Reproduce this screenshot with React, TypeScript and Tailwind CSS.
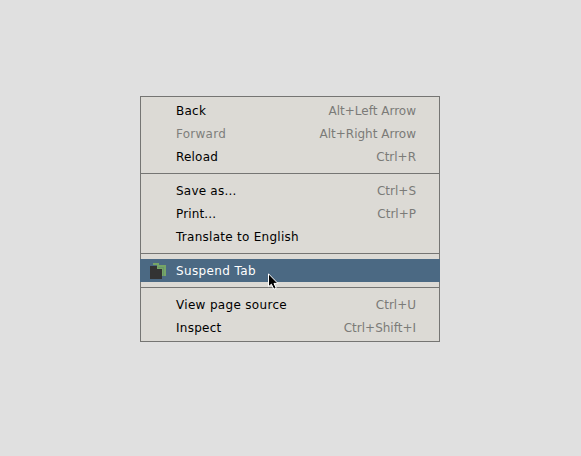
import React from "react";

type Item = {
  label: string;
  shortcut?: string;
  disabled?: boolean;
  active?: boolean;
  tracking?: string;
};

const groups: Item[][] = [
  [
    { label: "Back", shortcut: "Alt+Left Arrow" },
    { label: "Forward", shortcut: "Alt+Right Arrow", disabled: true, tracking: "tracking-[0.25px]" },
    { label: "Reload", shortcut: "Ctrl+R", tracking: "tracking-[0.2px]" },
  ],
  [
    { label: "Save as...", shortcut: "Ctrl+S", tracking: "tracking-[0.22px]" },
    { label: "Print...", shortcut: "Ctrl+P", tracking: "tracking-[0.15px]" },
    { label: "Translate to English", tracking: "tracking-[0.27px]" },
  ],
  [{ label: "Suspend Tab", active: true, tracking: "tracking-[0.38px]" }],
  [
    { label: "View page source", shortcut: "Ctrl+U", tracking: "tracking-[0.32px]" },
    { label: "Inspect", shortcut: "Ctrl+Shift+I" },
  ],
];

function TabsIcon() {
  return (
    <svg
      className="mt-px"
      width="16"
      height="16"
      viewBox="0 0 16 16"
      shapeRendering="crispEdges"
    >
      <path d="M3 0h6v2h7v11h-4V6H7V2H3z" fill="#76a566" />
      <path d="M8 4h6v9h-1V5H8z" fill="#67966a" />
      <path d="M0 3h7v3h5v10H0z" fill="#333333" />
    </svg>
  );
}

function Cursor() {
  return (
    <svg
      className="absolute left-[128px] top-[14px] z-10"
      width="11"
      height="17"
      viewBox="0 0 11 17"
    >
      <path
        d="M.5 .8V13.7L3.4 11.2L5.8 16.2L8.2 15.1L6 10.4H9.9Z"
        fill="#000"
        stroke="#fff"
        strokeWidth="1"
      />
    </svg>
  );
}

function Row({ item }: { item: Item }) {
  const tone = item.active
    ? "relative -mx-px bg-[#4b6983] pl-[10px] text-white"
    : item.disabled
      ? "pl-[9px] text-[#7f7f7c]"
      : "pl-[9px] text-black";
  return (
    <div className={`flex h-[23px] items-center pr-[23px] ${tone}`}>
      <span className="flex w-[26px] shrink-0">{item.active && <TabsIcon />}</span>
      <span className={`grow pt-0.5 ${item.tracking ?? "tracking-[0.25px]"}`}>{item.label}</span>
      {item.shortcut && <span className="pt-0.5 text-[#7b7b78]">{item.shortcut}</span>}
      {item.active && <Cursor />}
    </div>
  );
}

export default function App() {
  return (
    <div className="flex h-[456px] w-[581px] items-start bg-[#e0e0e0] pl-[140px] pt-24 font-['DejaVu_Sans',sans-serif] text-[12px] leading-[23px]">
      <div className="w-[300px] cursor-default border border-[#757573] bg-[#dcdad5] py-0.5">
        {groups.map((group, i) => (
          <React.Fragment key={i}>
            {i > 0 && <div className="my-[5px] h-px bg-[#757573]" />}
            {group.map((item) => (
              <Row key={item.label} item={item} />
            ))}
          </React.Fragment>
        ))}
      </div>
    </div>
  );
}
